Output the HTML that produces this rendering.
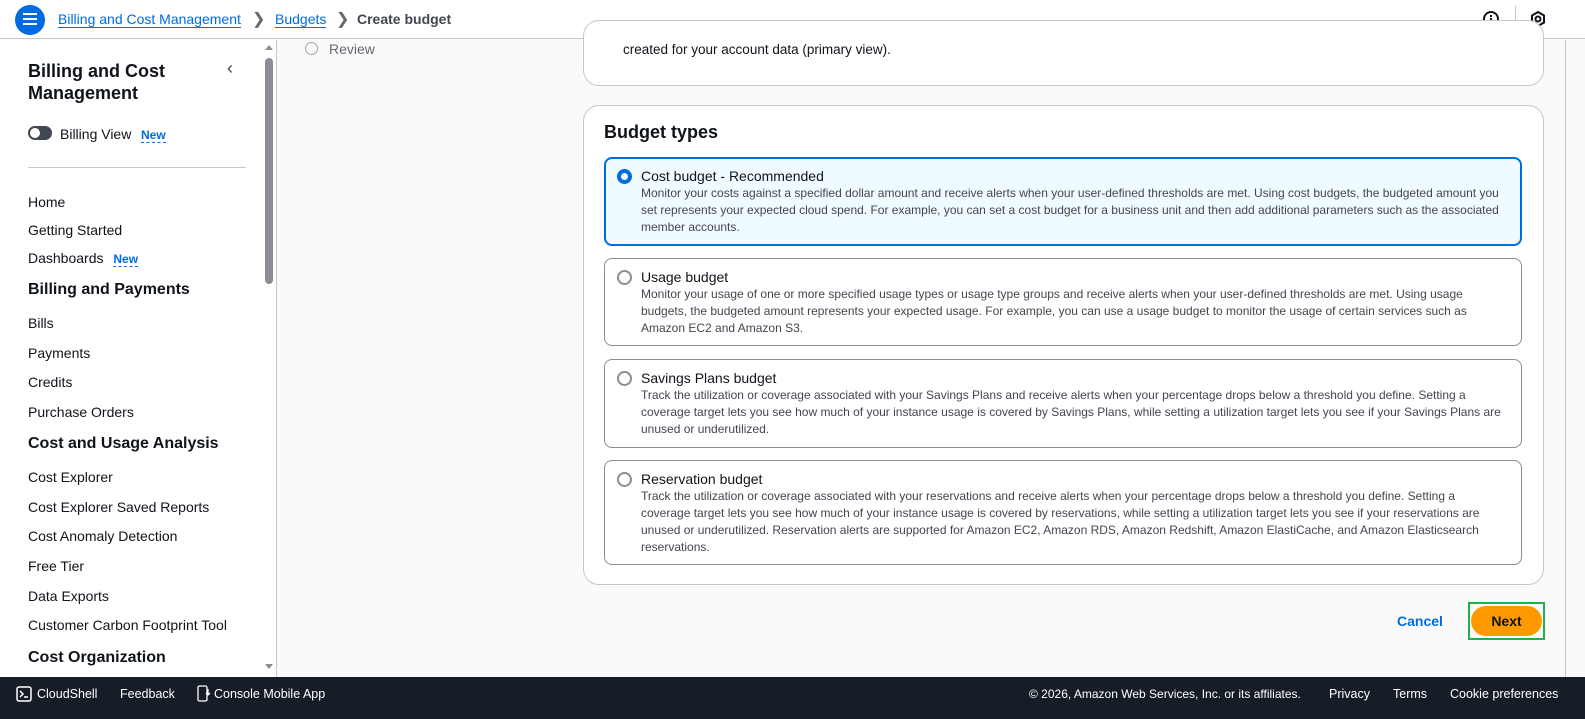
<!DOCTYPE html>
<html><head><meta charset="utf-8"><style>
*{box-sizing:border-box;margin:0;padding:0}
body{width:1585px;height:719px;overflow:hidden;font-family:"Liberation Sans",sans-serif;background:#fafafa;position:relative;color:#0f141a}
.hdr{position:absolute;left:0;top:0;width:1585px;height:39px;background:#fff;border-bottom:1px solid #c6c6cd}
.a{position:absolute;white-space:nowrap}
.side{position:absolute;left:0;top:40px;width:262px;height:637px;background:#fff}
.sb{position:absolute;left:262px;top:40px;width:15px;height:637px;background:#fff;border-right:1px solid #c6c6cd}
.nav{position:absolute;left:28px;font-size:14px;color:#0f141a}
.nh{position:absolute;left:28px;font-size:16px;font-weight:bold}
.card{position:absolute;background:#fff;border:1px solid #c6c6cd;border-radius:16px}
.opt{position:absolute;left:604px;width:918px;border:1px solid #8c8c94;border-radius:8px;background:#fff}
.opt.sel{border:2px solid #006ce0;background:#f0fbff}
.opt .t{position:absolute;left:36px;top:10px;font-size:14px}
.opt.sel .t{left:35px;top:9px}
.opt .d{position:absolute;left:36px;top:27px;font-size:12px;line-height:17px;color:#424650;width:866px;white-space:normal}
.opt.sel .d{left:35px;top:26px}
.rd{position:absolute;left:12px;top:11px;width:15px;height:15px;border-radius:50%;border:2px solid #8c8c94;background:#fff}
.sel .rd{border:4px solid #006ce0;left:11px;top:10px}
.ft{position:absolute;left:0;top:677px;width:1585px;height:42px;background:#161d26;color:#fff;font-size:12.5px}
.ft span{position:absolute;top:10px}
.new{color:#006ce0;font-size:12px;font-weight:bold;border-bottom:1px dashed #006ce0}
</style></head><body>
<div class="hdr">
<div class="a" style="left:15px;top:5px;width:30px;height:30px;border-radius:50%;background:#006ce0"></div>
<div class="a" style="left:23px;top:13px;width:14px;height:2px;background:#fff;box-shadow:0 5px #fff,0 10px #fff"></div>
<div class="a" style="left:58px;top:11px;font-size:14px;color:#006ce0;border-bottom:1px solid #006ce0">Billing and Cost Management</div>
<div class="a" style="left:252px;top:9px;font-size:16px;color:#656871">&#x276F;</div>
<div class="a" style="left:275px;top:11px;font-size:14px;color:#006ce0;border-bottom:1px solid #006ce0">Budgets</div>
<div class="a" style="left:336px;top:9px;font-size:16px;color:#656871">&#x276F;</div>
<div class="a" style="left:357px;top:11px;font-size:14px;font-weight:bold;color:#424650">Create budget</div>
<svg class="a" style="left:1482px;top:10px" width="18" height="18"><circle cx="9" cy="9" r="7" fill="none" stroke="#0f141a" stroke-width="2"/><rect x="8" y="8" width="2" height="5" fill="#0f141a"/><rect x="8" y="5" width="2" height="2" fill="#0f141a"/></svg>
<div class="a" style="left:1515px;top:6px;width:1px;height:24px;background:#c6c6cd"></div>
<svg class="a" style="left:1529px;top:10px" width="18" height="18"><path d="M9 2 L15 5.5 L15 12.5 L9 16 L3 12.5 L3 5.5Z" fill="none" stroke="#0f141a" stroke-width="2"/><circle cx="9" cy="9" r="2.5" fill="none" stroke="#0f141a" stroke-width="2"/></svg>
</div>
<div class="side">
<div class="a" style="left:28px;top:20px;font-size:18px;font-weight:bold;line-height:22px">Billing and Cost<br>Management</div>
<div class="a" style="left:227px;top:18px;font-size:18px;color:#424650">&#x2039;</div>
<div class="a" style="left:28px;top:86px;width:24px;height:14px;border-radius:7px;background:#424650"></div>
<div class="a" style="left:30px;top:88px;width:10px;height:10px;border-radius:50%;background:#fff"></div>
<div class="a" style="left:60px;top:86px;font-size:14px">Billing View</div>
<div class="a new" style="left:141px;top:88px">New</div>
<div class="a" style="left:28px;top:127px;width:218px;height:1px;background:#c6c6cd"></div>
<div class="nav" style="top:154px">Home</div>
<div class="nav" style="top:182px">Getting Started</div>
<div class="nav" style="top:210px">Dashboards <span class="new" style="margin-left:6px">New</span></div>
<div class="nh" style="top:241px">Billing and Payments</div>
<div class="nav" style="top:275px">Bills</div>
<div class="nav" style="top:305px">Payments</div>
<div class="nav" style="top:334px">Credits</div>
<div class="nav" style="top:364px">Purchase Orders</div>
<div class="nh" style="top:395px">Cost and Usage Analysis</div>
<div class="nav" style="top:429px">Cost Explorer</div>
<div class="nav" style="top:459px">Cost Explorer Saved Reports</div>
<div class="nav" style="top:488px">Cost Anomaly Detection</div>
<div class="nav" style="top:518px">Free Tier</div>
<div class="nav" style="top:548px">Data Exports</div>
<div class="nav" style="top:577px">Customer Carbon Footprint Tool</div>
<div class="nh" style="top:609px">Cost Organization</div>
</div>
<div class="sb">
<div class="a" style="left:3px;top:5px;border-left:4px solid transparent;border-right:4px solid transparent;border-bottom:5px solid #8c8c94"></div>
<div class="a" style="left:3px;top:18px;width:8px;height:226px;border-radius:4px;background:#8c8c94"></div>
<div class="a" style="left:3px;top:624px;border-left:4px solid transparent;border-right:4px solid transparent;border-top:5px solid #8c8c94"></div>
</div>
<div class="a" style="left:305px;top:42px;width:13px;height:13px;border-radius:50%;border:1.5px solid #a0a0a8"></div>
<div class="a" style="left:329px;top:41px;font-size:14px;color:#656871">Review</div>
<div class="card" style="left:583px;top:20px;width:961px;height:66px"></div>
<div class="a" style="left:623px;top:42px;font-size:13.5px;color:#0f141a">created for your account data (primary view).</div>
<div class="card" style="left:583px;top:105px;width:961px;height:480px"></div>
<div class="a" style="left:604px;top:122px;font-size:18px;font-weight:bold">Budget types</div>
<div class="opt sel" style="top:157px;height:89px"><div class="rd"></div><div class="t">Cost budget - Recommended</div><div class="d">Monitor your costs against a specified dollar amount and receive alerts when your user-defined thresholds are met. Using cost budgets, the budgeted amount you set represents your expected cloud spend. For example, you can set a cost budget for a business unit and then add additional parameters such as the associated member accounts.</div></div>
<div class="opt" style="top:258px;height:88px"><div class="rd"></div><div class="t">Usage budget</div><div class="d">Monitor your usage of one or more specified usage types or usage type groups and receive alerts when your user-defined thresholds are met. Using usage budgets, the budgeted amount represents your expected usage. For example, you can use a usage budget to monitor the usage of certain services such as Amazon EC2 and Amazon S3.</div></div>
<div class="opt" style="top:359px;height:89px"><div class="rd"></div><div class="t">Savings Plans budget</div><div class="d">Track the utilization or coverage associated with your Savings Plans and receive alerts when your percentage drops below a threshold you define. Setting a coverage target lets you see how much of your instance usage is covered by Savings Plans, while setting a utilization target lets you see if your Savings Plans are unused or underutilized.</div></div>
<div class="opt" style="top:460px;height:105px"><div class="rd"></div><div class="t">Reservation budget</div><div class="d">Track the utilization or coverage associated with your reservations and receive alerts when your percentage drops below a threshold you define. Setting a coverage target lets you see how much of your instance usage is covered by reservations, while setting a utilization target lets you see if your reservations are unused or underutilized. Reservation alerts are supported for Amazon EC2, Amazon RDS, Amazon Redshift, Amazon ElastiCache, and Amazon Elasticsearch reservations.</div></div>
<div class="a" style="left:1397px;top:613px;font-size:14px;font-weight:bold;color:#006ce0">Cancel</div>
<div class="a" style="left:1468px;top:602px;width:77px;height:38px;border:2px solid #22b04a"></div>
<div class="a" style="left:1471px;top:606px;width:71px;height:30px;border-radius:15px;background:#ff9900;font-size:14px;font-weight:bold;text-align:center;line-height:30px">Next</div>
<div class="a" style="left:1565px;top:40px;width:20px;height:637px;background:#fafafa;border-left:1px solid #c6c6cd"></div>
<div class="ft">
<svg class="a" style="left:16px;top:9px" width="16" height="16"><rect x="1" y="1" width="14" height="14" rx="2" fill="none" stroke="#fff" stroke-width="1.5"/><path d="M4 5l3 3-3 3M8 11h4" stroke="#fff" stroke-width="1.5" fill="none"/></svg>
<span style="left:37px">CloudShell</span>
<span style="left:120px">Feedback</span>
<svg class="a" style="left:197px;top:8px" width="14" height="18"><rect x="1" y="1" width="9" height="15" rx="1.5" fill="none" stroke="#fff" stroke-width="1.3"/><path d="M11 4v6M9 8l2 2 2-2" stroke="#fff" stroke-width="1.3" fill="none"/></svg>
<span style="left:214px">Console Mobile App</span>
<span style="left:1029px;font-size:12px">© 2026, Amazon Web Services, Inc. or its affiliates.</span>
<span style="left:1329px">Privacy</span>
<span style="left:1393px">Terms</span>
<span style="left:1450px">Cookie preferences</span>
</div>
</body></html>
